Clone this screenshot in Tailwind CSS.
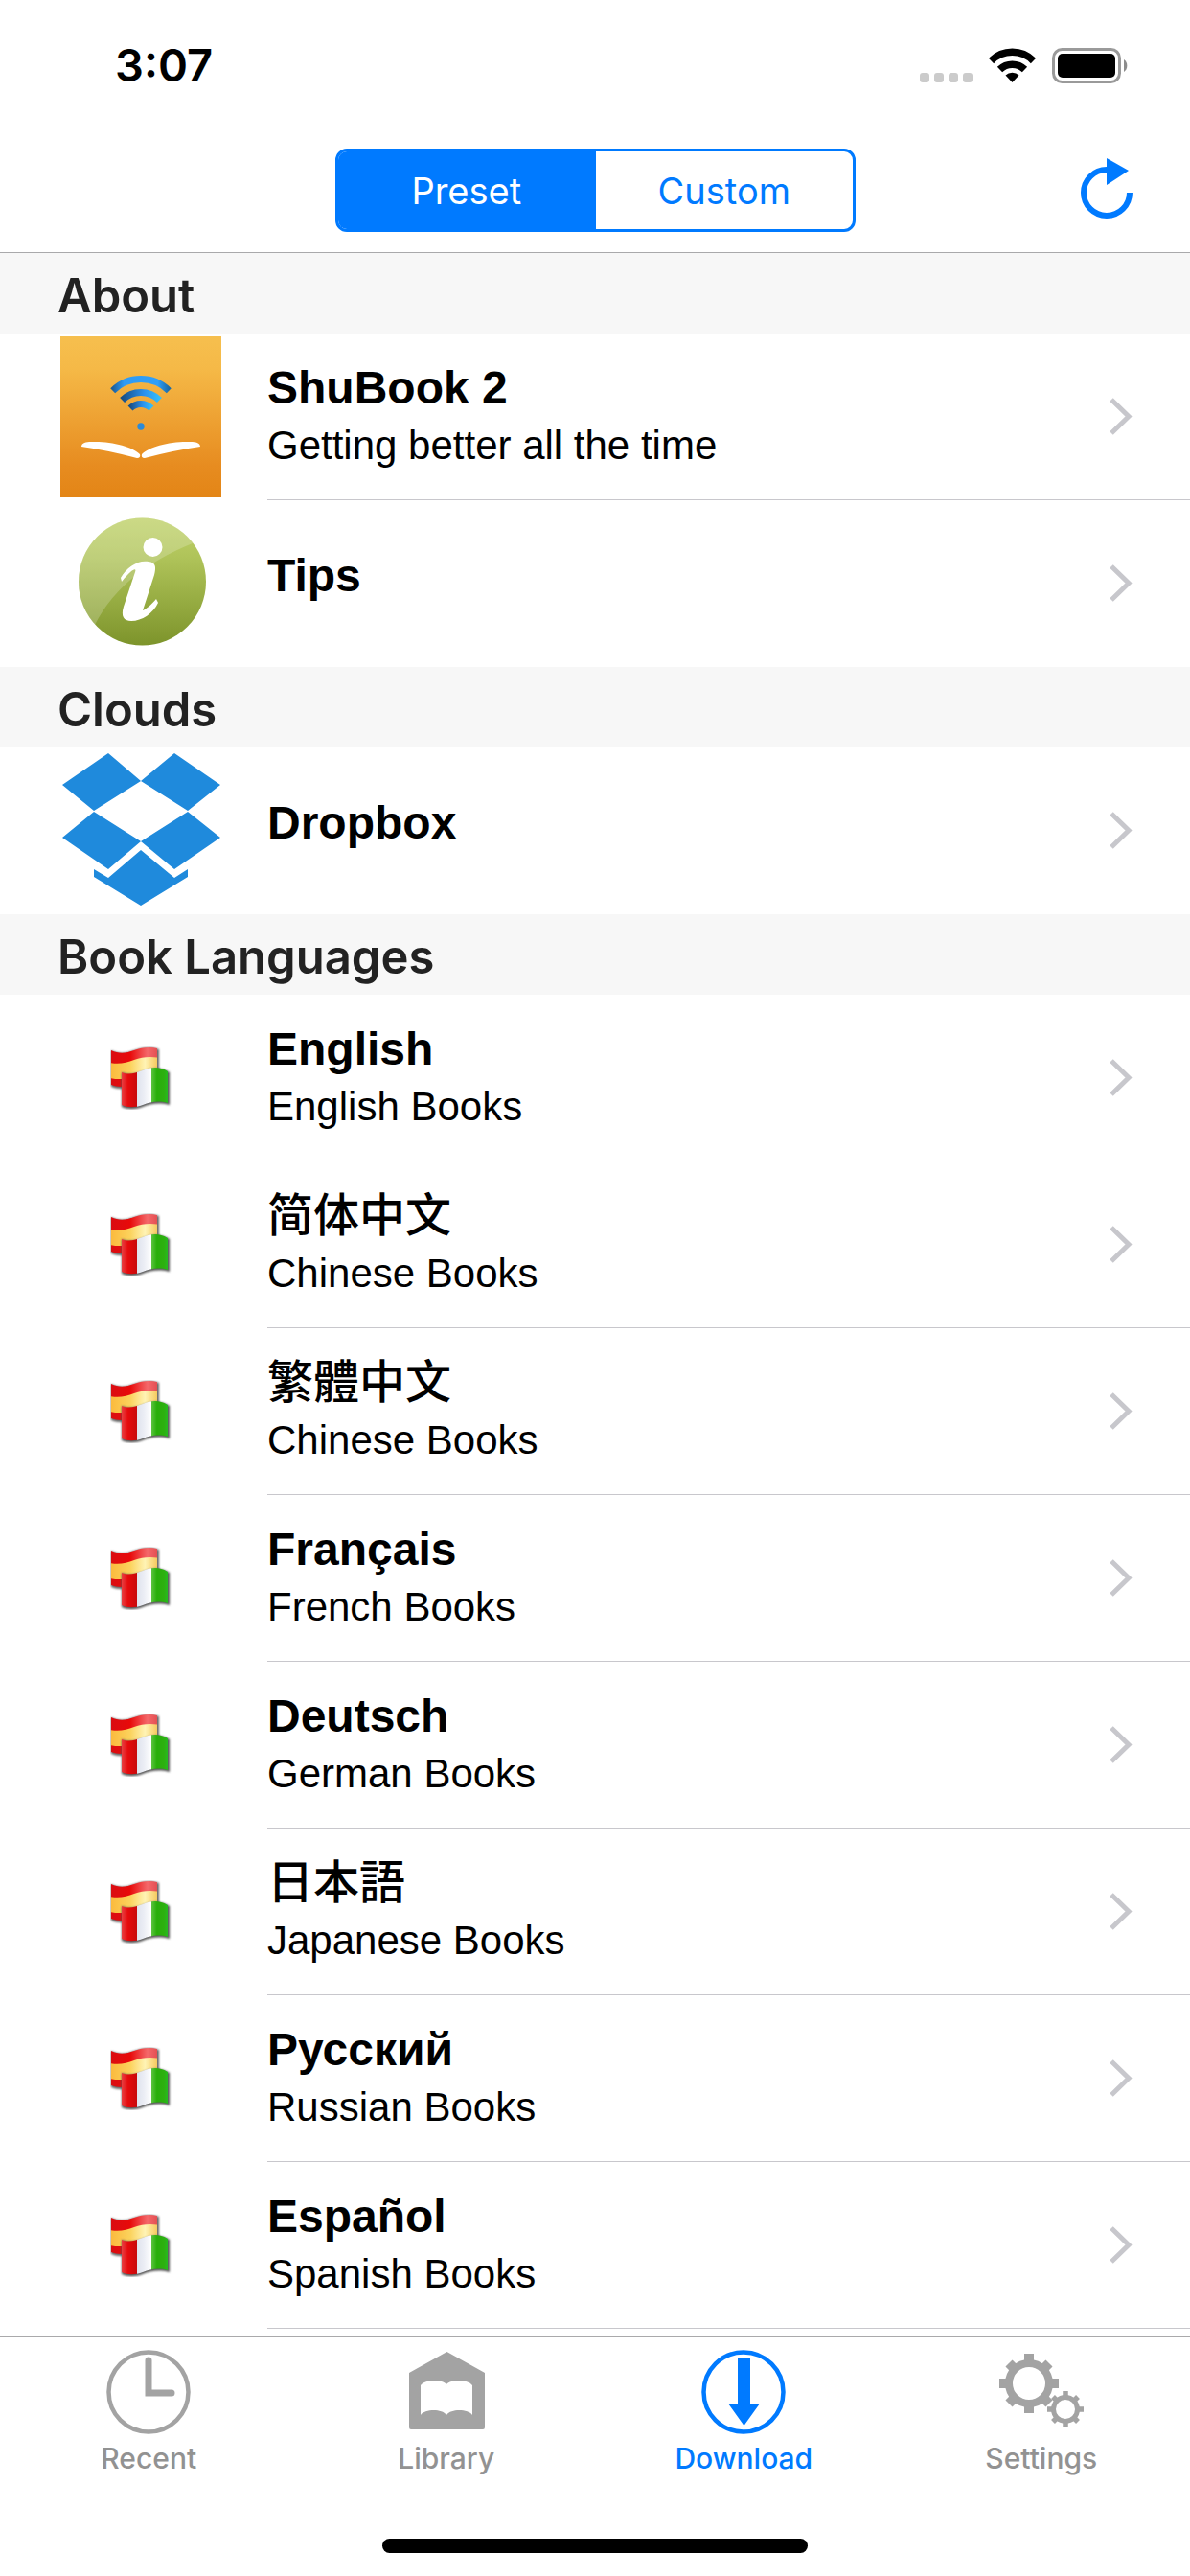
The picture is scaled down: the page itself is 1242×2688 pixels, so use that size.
<!DOCTYPE html>
<html lang="en">
<head>
<meta charset="utf-8">
<meta name="viewport" content="width=device-width, initial-scale=1">
<title>ShuBook – Download</title>
<script src="https://cdn.jsdelivr.net/npm/@tailwindcss/browser@4"></script>
</head>
<body class="min-h-screen flex flex-col bg-white text-black font-['Inter',sans-serif]">

<!-- Shared icon shapes -->
<svg class="absolute w-0 h-0" aria-hidden="true">
  <defs>
    <linearGradient id="redStripe" x1="0" x2="1" y1="0" y2="0"><stop offset="0" stop-color="#d90d12"/><stop offset=".4" stop-color="#e80a0a"/><stop offset=".75" stop-color="#f4686a"/><stop offset="1" stop-color="#e0484c"/></linearGradient>
    <linearGradient id="goldStripe" x1="0" x2="1" y1="0" y2="0"><stop offset="0" stop-color="#fbb93c"/><stop offset=".4" stop-color="#fbd25c"/><stop offset=".7" stop-color="#fff3b4"/><stop offset="1" stop-color="#f3c04a"/></linearGradient>
    <linearGradient id="redBar" x1="0" x2="1" y1="0" y2="0"><stop offset="0" stop-color="#e8474a"/><stop offset=".45" stop-color="#e60a0c"/><stop offset="1" stop-color="#c80a0c"/></linearGradient>
    <linearGradient id="whiteBar" x1="0" x2="1" y1="0" y2="0"><stop offset="0" stop-color="#dfe3ee"/><stop offset=".5" stop-color="#eceef5"/><stop offset="1" stop-color="#fff"/></linearGradient>
    <linearGradient id="greenBar" x1="0" x2="1" y1="0" y2="0"><stop offset="0" stop-color="#5cc440"/><stop offset=".3" stop-color="#28ae0a"/><stop offset=".7" stop-color="#2db010"/><stop offset="1" stop-color="#1fc42a"/></linearGradient>
    <filter id="flagShadow" x="-20%" y="-20%" width="140%" height="140%"><feGaussianBlur stdDeviation="1.2"/></filter>
    <clipPath id="backFlag"><path d="M1 4C9 8 17 7 25 4S42 0 49 2V40C40 37 33 38 25 40S8 43 1 40Z"/></clipPath>
    <clipPath id="frontFlag"><path d="M12 27C19 30 26 28 34 25S50 20 60 26V59C50 56 42 58 34 61S18 64 12 61Z"/></clipPath>
    <symbol id="flags" viewBox="0 0 64 66">
      <path d="M1 4C9 8 17 7 25 4S43 0 51 3V41C40 38 33 39 25 42S8 45 1 42Z" fill="#666" filter="url(#flagShadow)"/>
      <g clip-path="url(#backFlag)">
        <path d="M0 0H52V46H0Z" fill="url(#redStripe)"/>
        <path d="M0 17C9 19 17 17 25 14S42 10 52 12V33C42 28 33 30 25 32S8 35 0 33Z" fill="url(#goldStripe)"/>
      </g>
      <path d="M12 27C19 30 26 29 34 26S51 20 62 27V61C50 58 42 60 34 63S18 66 12 63Z" fill="#555" filter="url(#flagShadow)"/>
      <g clip-path="url(#frontFlag)">
        <path d="M11 18H28V66H11Z" fill="url(#redBar)"/>
        <path d="M28 18H43V66H28Z" fill="url(#whiteBar)"/>
        <path d="M43 18H62V66H43Z" fill="url(#greenBar)"/>
      </g>
    </symbol>
    <symbol id="chevron" viewBox="0 0 24 39"><path d="M2 2L20 19.500L2 37" fill="none" stroke="#c7c7cc" stroke-width="5"/></symbol>
  </defs>
</svg>

<header class="border-b border-[#a9a9ab]">
  <div class="h-[135px] flex items-center justify-between pl-30 pr-16">
    <time class="text-[47px] leading-[60px] font-semibold">3:07</time>
    <svg class="w-[218px] h-[38px]" viewBox="960 48 218 38" role="img" aria-label="Signal, Wi-Fi and battery">
      <g fill="#cbcbcb"><rect x="960" y="75" width="10" height="10" rx="3"/><rect x="975" y="75" width="10" height="10" rx="3"/><rect x="990" y="75" width="10" height="10" rx="3"/><rect x="1005" y="75" width="10" height="10" rx="3"/></g>
      <path d="M1034.500 62.500A31 31 0 0 1 1078.500 62.500M1043.500 71.500A18.500 18.500 0 0 1 1069.500 71.500" fill="none" stroke="#000" stroke-width="7.500"/>
      <path d="M1056.500 85L1049.500 77.500A10 10 0 0 1 1063.500 77.500Z"/>
      <rect x="1099.500" y="50.500" width="69" height="34" rx="9" fill="none" stroke="#9a9a9a" stroke-width="3"/>
      <rect x="1104" y="55" width="60" height="25" rx="5"/>
      <path d="M1173 61A8 8 0 0 1 1173 74Z" fill="#8c8c8c"/>
    </svg>
  </div>
  <div class="h-32 grid grid-cols-[1fr_543px_1fr] items-start pt-5">
    <div class="col-start-2 h-[87px] grid grid-cols-2 border-3 border-[#007aff] rounded-[12px] overflow-hidden text-[38px] leading-[48px]" role="group" aria-label="Source">
      <button type="button" class="bg-[#007aff] text-white" aria-pressed="true">Preset</button>
      <button type="button" class="border-l border-[#007aff] text-[#007aff]" aria-pressed="false">Custom</button>
    </div>
    <button type="button" class="justify-self-end mr-15 mt-2" aria-label="Reload">
      <svg class="w-[54px] h-[68px]" viewBox="0 0 54 68"><path d="M27 14A24 24 0 1 0 51 38" fill="none" stroke="#007aff" stroke-width="6"/><path d="M27 2L50 15L27 30Z" fill="#007aff"/></svg>
    </button>
  </div>
</header>

<main class="flex-1" id="list"></main>

<nav class="border-t border-[#a9a9ab] h-[250px] flex flex-col justify-between pb-6" aria-label="Main">
  <div class="grid grid-cols-4 pt-3 text-[30px] leading-[36px] font-medium text-[#929292]">
    <a href="#recent" class="flex flex-col items-center gap-1.5">
      <svg class="w-[90px] h-[90px]" viewBox="0 0 90 90" fill="none" stroke="#a3a3a3"><circle cx="45" cy="45" r="41.500" stroke-width="4.500"/><path d="M45 12V46H69" stroke-width="7" stroke-linecap="round"/></svg>
      Recent
    </a>
    <a href="#library" class="flex flex-col items-center gap-1.5">
      <svg class="w-[90px] h-[90px]" viewBox="0 0 90 90" fill="#a3a3a3"><path fill-rule="evenodd" d="M45.500 3L85 25V82Q85 84 83 84H8Q6 84 6 82V25ZM45 37C40 31 22 32 18 38V69C22 63 40 62 45 69C50 62 68 63 72 69V38C68 32 50 31 45 37Z"/></svg>
      Library
    </a>
    <a href="#download" class="flex flex-col items-center gap-1.5 text-[#007aff]" aria-current="page">
      <svg class="w-[90px] h-[90px]" viewBox="0 0 90 90"><circle cx="45" cy="45" r="41.500" fill="none" stroke="#007aff" stroke-width="4.500"/><path d="M39 9H52V57H62L45.500 80L29 57H39Z" fill="#007aff"/></svg>
      Download
    </a>
    <a href="#settings" class="flex flex-col items-center gap-1.5">
      <svg class="w-[90px] h-[90px]" viewBox="0 0 90 90" fill="none" stroke="#a3a3a3">
        <g><circle cx="32" cy="36" r="21" stroke-width="8"/><path stroke-width="10" d="M32 5V14M32 58V67M1 36H10M54 36H63M11 15L16 20M48 52L53 57M53 15L48 20M16 52L11 57"/></g>
        <g><circle cx="70" cy="63" r="12.500" stroke-width="5"/><path stroke-width="5.500" d="M70 44V49M70 77V82M51 63H56M84 63H89M57 50L60 53M80 73L83 76M83 50L80 53M60 73L57 76"/></g>
      </svg>
      Settings
    </a>
  </div>
  <div class="w-[444px] h-[15px] rounded-full bg-black self-center"></div>
</nav>

<template id="icon-app">
  <svg class="w-[168px] h-[168px]" viewBox="0 0 168 168">
    <defs><linearGradient id="orange" x1="0" x2="0" y1="0" y2="1"><stop offset="0" stop-color="#f6bf4e"/><stop offset=".2" stop-color="#f5b947"/><stop offset=".8" stop-color="#e78c20"/><stop offset="1" stop-color="#e38516"/></linearGradient>
    <linearGradient id="waveA" x1="0" x2="1"><stop offset="0" stop-color="#1b5f9c"/><stop offset=".2" stop-color="#2f9bf5"/><stop offset=".8" stop-color="#2f9ff8"/><stop offset="1" stop-color="#1c6ba8"/></linearGradient>
    <linearGradient id="waveB" x1="0" x2="1"><stop offset="0" stop-color="#174f86"/><stop offset=".6" stop-color="#2b92ee"/><stop offset="1" stop-color="#35bdf8"/></linearGradient></defs>
    <path d="M0 0H168V168H0Z" fill="url(#orange)"/>
    <g fill="none" stroke-width="7">
      <path d="M54.700 56.700A41.500 41.500 0 0 1 113.300 56.700" stroke="url(#waveA)"/>
      <path d="M64.600 66.600A27.500 27.500 0 0 1 103.400 66.600" stroke="url(#waveB)"/>
      <path d="M73 75A15.500 15.500 0 0 1 95 75" stroke="url(#waveB)"/>
    </g>
    <circle cx="84" cy="94" r="3.700" fill="#2b8ad8"/>
    <path d="M22 115C22 111 27 110 32 110C52 109 76 115 83 123Q84 127 80 127Q50 119 22 115ZM146 115C146 111 141 110 136 110C116 109 92 115 85 123Q84 127 88 127Q118 119 146 115Z" fill="#fff"/>
  </svg>
</template>
<template id="icon-tips">
  <svg class="w-[168px] h-[168px]" viewBox="63 525 168 168">
    <defs><linearGradient id="olive" x1="0" x2="0" y1="0" y2="1"><stop offset="0" stop-color="#bfd168"/><stop offset=".3" stop-color="#b0c45a"/><stop offset="1" stop-color="#7d942b"/></linearGradient><clipPath id="disc"><circle cx="148.500" cy="607" r="66.500"/></clipPath></defs>
    <circle cx="148.500" cy="607" r="66.500" fill="url(#olive)"/>
    <path clip-path="url(#disc)" d="M80 530H220V560Q130 590 99 652L80 660Z" fill="#fff" fill-opacity=".2"/>
    <circle cx="159.500" cy="571" r="10" fill="#fff"/>
    <path d="M126 603C132 592 144 584 155 586C163 587 163 592 161 600L149 637C152 636 158 631 163 625L165 629C160 640 148 648 137 648C129 648 126 643 129 633L141 597C143 592 138 593 127 607Z" fill="#fff"/>
  </svg>
</template>
<template id="icon-dropbox">
  <svg class="w-[168px] h-[168px]" viewBox="0 0 168 168" fill="#1f8adc">
    <path d="M50 3L84 32L35 63L2 36ZM119 3L167 36L133 63L84 32ZM35 64L84 95L50 124L2 91ZM133 64L167 91L119 124L84 95ZM84 104L119 133L133 124V132L84 162L35 132V124L50 133Z"/>
  </svg>
</template>
<template id="icon-flags">
  <svg class="w-[64px] h-[66px]"><use href="#flags"/></svg>
</template>

<script>
  const sections = [
    ['About', [['app', 'ShuBook 2', 'Getting better all the time'], ['tips', 'Tips']]],
    ['Clouds', [['dropbox', 'Dropbox']]],
    ['Book Languages', [
      ['flags', 'English', 'English Books', 'en'],
      ['flags', '简体中文', 'Chinese Books', 'zh-Hans'],
      ['flags', '繁體中文', 'Chinese Books', 'zh-Hant'],
      ['flags', 'Français', 'French Books', 'fr'],
      ['flags', 'Deutsch', 'German Books', 'de'],
      ['flags', '日本語', 'Japanese Books', 'ja'],
      ['flags', 'Русский', 'Russian Books', 'ru'],
      ['flags', 'Español', 'Spanish Books', 'es'],
    ]],
  ];
  const cjk = {
    'zh-Hans': "font-['Liberation_Sans','Noto_Sans_CJK_SC',sans-serif]",
    'zh-Hant': "font-['Liberation_Sans','Noto_Sans_CJK_TC',sans-serif]",
    'ja': "font-['Liberation_Sans','Noto_Sans_CJK_JP',sans-serif]",
  };
  const row = ([icon, title, sub, lang = 'en'], i, all) => {
    const last = i === all.length - 1 && icon !== 'flags';
    return `
    <li><a href="#" class="h-[174px] flex pl-[63px]">
      <span class="w-[168px] shrink-0 flex items-center justify-center">${document.getElementById('icon-' + icon).innerHTML}</span>
      <span class="flex-1 ml-12 pr-15 flex items-center justify-between border-b ${last ? 'border-transparent' : 'border-[#c8c7cc]'}">
        <span class="flex flex-col ${sub ? '' : 'pb-4'} font-['Liberation_Sans',sans-serif]">
          <span lang="${lang}" class="text-[48px] leading-[60px] ${cjk[lang] || ''} ${cjk[lang] ? 'font-medium' : 'font-bold'}">${title}</span>
          ${sub ? `<span class="text-[42px] leading-[60px]">${sub}</span>` : ''}
        </span>
        <svg class="w-[24px] h-[39px]" aria-hidden="true"><use href="#chevron"/></svg>
      </span>
    </a></li>`;
  };
  document.getElementById('list').innerHTML = sections.map(([name, rows]) => `
    <section>
      <h2 class="h-[84px] flex items-center pl-15 pt-1.5 bg-[#f7f7f7] text-[#222] text-[49px] leading-[60px] font-semibold">${name}</h2>
      <ul>${rows.map(row).join('')}</ul>
    </section>`).join('');
</script>
</body>
</html>
